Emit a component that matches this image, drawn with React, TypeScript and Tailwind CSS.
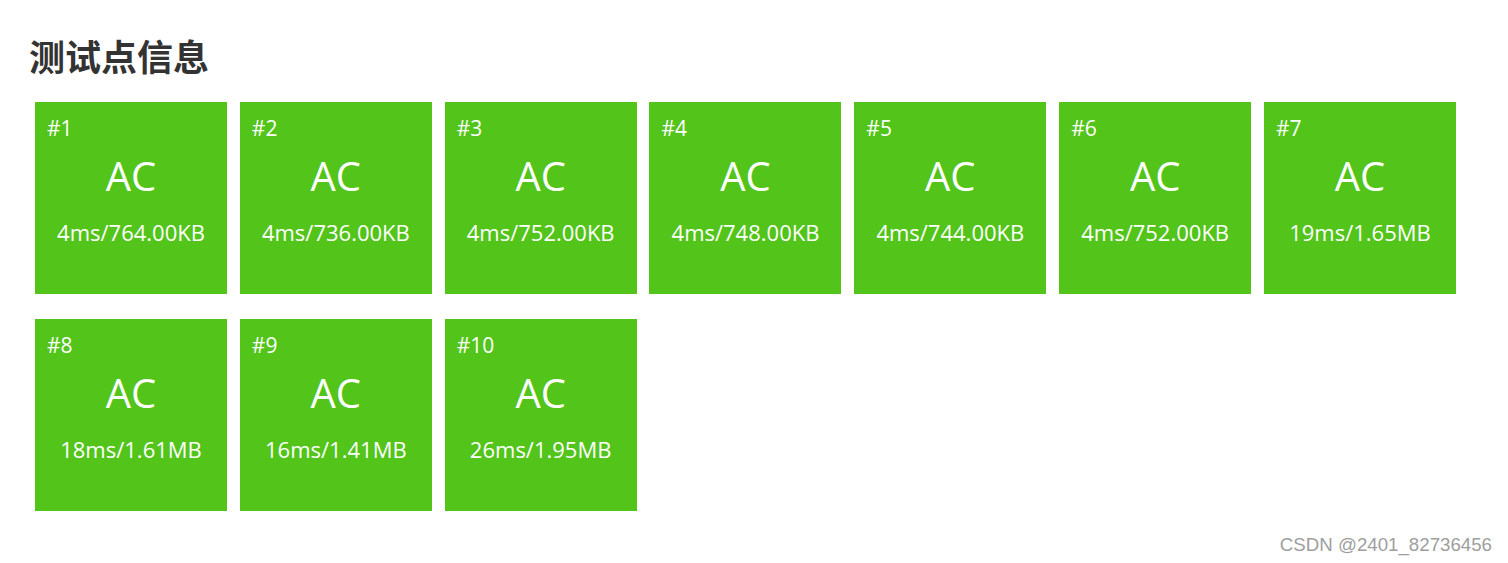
import React from "react";

const cases = [
  "4ms/764.00KB",
  "4ms/736.00KB",
  "4ms/752.00KB",
  "4ms/748.00KB",
  "4ms/744.00KB",
  "4ms/752.00KB",
  "19ms/1.65MB",
  "18ms/1.61MB",
  "16ms/1.41MB",
  "26ms/1.95MB",
];

export default function App() {
  return (
    <div className="relative w-[1508px] h-[563px] bg-white overflow-hidden" style={{ fontFamily: '"Open Sans", "Noto Sans", sans-serif' }}>
      <div className="pl-[35px] pt-[32px]">
        <h2
          className="-ml-[6px] text-[36px] leading-[46px] font-bold text-[#333333]"
          style={{ fontFamily: '"Noto Sans CJK SC", sans-serif' }}
        >
          测试点信息
        </h2>
        <div className="mt-[24px] flex flex-wrap gap-x-[12.83px] gap-y-[25px] w-[1430px]">
          {cases.map((c, i) => (
            <div key={i} className="w-[192px] h-[192px] bg-[#52c41a] text-white flex flex-col">
              <div className="pl-[12px] pt-[14px] text-[21px] leading-[24px]">#{i + 1}</div>
              <div className="text-center text-[40px] leading-[48px] mt-[12px]">AC</div>
              <div className="text-center text-[22px] leading-[28px] mt-[18px]">{c}</div>
            </div>
          ))}
        </div>
      </div>
      <div
        className="absolute right-[16px] bottom-[8px] text-[18.7px] leading-[20px] text-[#9e9e9e]"
        style={{ fontFamily: '"Liberation Sans", Arial, sans-serif' }}
      >
        CSDN @2401_82736456
      </div>
    </div>
  );
}
